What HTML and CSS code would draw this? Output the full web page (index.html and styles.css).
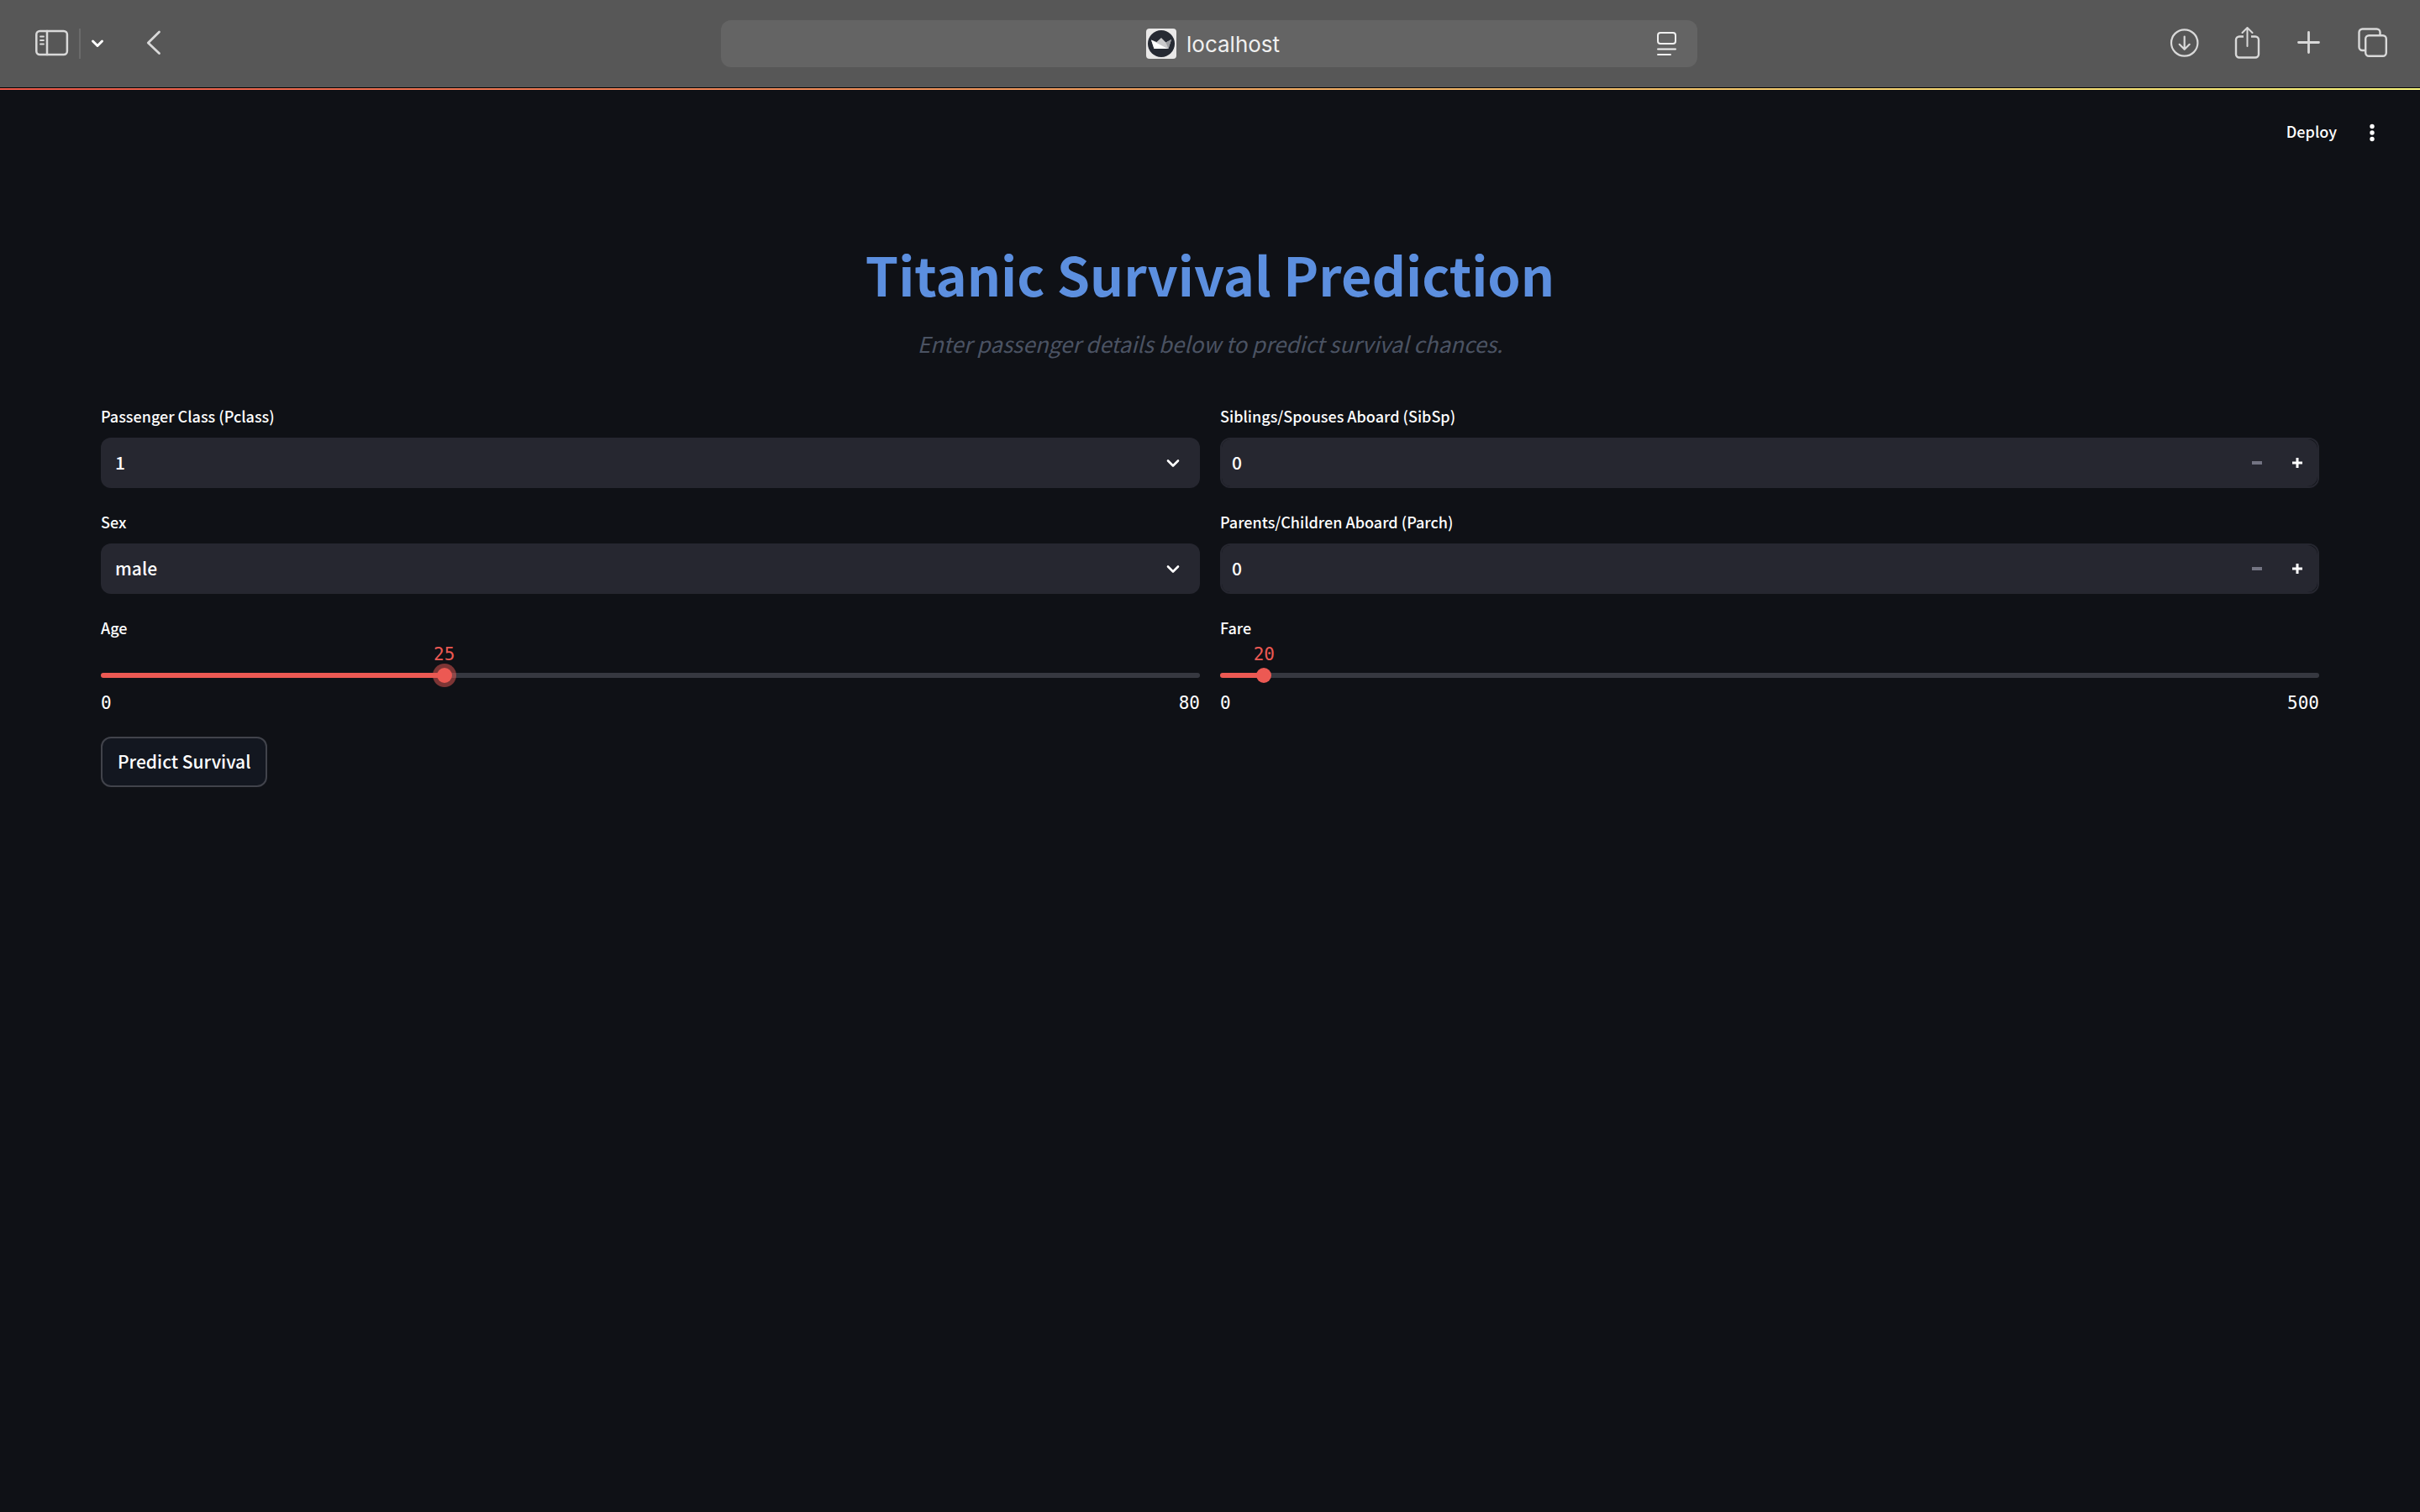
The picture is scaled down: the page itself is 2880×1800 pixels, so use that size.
FILE: index.html
```html
<!DOCTYPE html>
<html lang="en">
<head>
<meta charset="utf-8">
<meta name="viewport" content="width=device-width, initial-scale=1">
<title>Titanic Survival Prediction</title>
<link rel="stylesheet" href="styles.css">
</head>
<body>
<header class="browser">
  <div class="browser-left">
    <button class="icon-btn" type="button" aria-label="Sidebar">
      <svg width="40" height="40" viewBox="0 0 40 40" fill="none" stroke="currentColor" stroke-width="2.5" stroke-linecap="round"><rect x="1.3" y="5" width="36.6" height="28" rx="4"/><path d="M14 5v28"/><path stroke-width="1.8" d="M6 11.500h4M6 16h4M6 20.500h4"/></svg>
    </button>
    <span class="divider"></span>
    <button class="icon-btn bright" type="button" aria-label="Tab groups">
      <svg width="24" height="40" viewBox="0 0 24 40" fill="none" stroke="currentColor" stroke-width="3" stroke-linecap="round" stroke-linejoin="round"><path d="M6.500 17l5.500 5.500 5.500-5.500"/></svg>
    </button>
    <button class="icon-btn back" type="button" aria-label="Back">
      <svg width="40" height="40" viewBox="0 0 40 40" fill="none" stroke="currentColor" stroke-width="2.800" stroke-linecap="round" stroke-linejoin="round"><path d="M26.500 6L13.300 19 26.500 31.500"/></svg>
    </button>
  </div>
  <div class="address">
    <div class="site">
      <svg width="36" height="36" viewBox="0 0 36 36"><rect width="36" height="36" rx="4" fill="#e9e8e8"/><circle cx="18" cy="18" r="16" fill="#262a33"/><path d="M6 13.500L12.500 16 18 11l5.500 5.500L30 13l-3.500 11h-17z" fill="#c9c9cb"/><path d="M6 13.500l19.500 10.500h-16z" fill="#fff"/><path d="M23.500 16.500L30 13l-3.500 11z" fill="#9c9da1"/></svg>
      <input class="url" type="text" value="localhost" aria-label="Address">
    </div>
    <button class="icon-btn reader" type="button" aria-label="Page menu">
      <svg width="24" height="36" viewBox="0 0 24 36" fill="none" stroke="currentColor" stroke-width="2" stroke-linecap="round"><rect x="1" y="5" width="21" height="13" rx="3"/><path d="M1 24.400h21M1 31h15"/></svg>
    </button>
  </div>
  <div class="browser-right">
    <button class="icon-btn" type="button" aria-label="Downloads">
      <svg width="40" height="40" viewBox="0 0 40 40" fill="none" stroke="currentColor" stroke-width="2.200" stroke-linecap="round" stroke-linejoin="round"><circle cx="20.700" cy="19" r="15.700"/><path d="M20.700 11.500v15M14.700 20.800l6 6 6-6"/></svg>
    </button>
    <button class="icon-btn" type="button" aria-label="Share">
      <svg width="40" height="40" viewBox="0 0 40 40" fill="none" stroke="currentColor" stroke-width="2.400" stroke-linecap="round" stroke-linejoin="round"><path stroke-linecap="butt" d="M16 11.500h-5a4 4 0 0 0-4 4v17a4 4 0 0 0 4 4h19a4 4 0 0 0 4-4v-17a4 4 0 0 0-4-4h-5"/><path stroke-width="2" d="M20.500 23V1.500M14.500 7l6-6 6 6"/></svg>
    </button>
    <button class="icon-btn" type="button" aria-label="New tab">
      <svg width="40" height="40" viewBox="0 0 40 40" fill="none" stroke="currentColor" stroke-width="2.800" stroke-linecap="round"><path d="M6.500 18.500h24M18.500 6.500v24"/></svg>
    </button>
    <button class="icon-btn" type="button" aria-label="Tab overview">
      <svg width="40" height="40" viewBox="0 0 40 40" fill="none" stroke="currentColor" stroke-width="2.400"><rect x="11.200" y="10.200" width="24.600" height="24.600" rx="4"/><path d="M10.500 28H7.500a4 4 0 0 1-4-4V6.500a4 4 0 0 1 4-4h17a4 4 0 0 1 4 4v3"/></svg>
    </button>
  </div>
</header>

<div class="decoration"></div>

<div class="toolbar">
  <button class="deploy" type="button">Deploy</button>
  <button class="icon-btn menu" type="button" aria-label="Main menu">
    <svg width="24" height="30" viewBox="0 0 24 30" fill="currentColor"><circle cx="12" cy="7.500" r="2.700"/><circle cx="12" cy="15" r="2.700"/><circle cx="12" cy="22.500" r="2.700"/></svg>
  </button>
</div>

<main class="app">
  <h1 class="title">Titanic Survival Prediction</h1>
  <p class="subtitle">Enter passenger details below to predict survival chances.</p>

  <form class="form">
    <div class="columns">
      <div class="column">
        <div class="field">
          <label class="label" for="pclass">Passenger Class (Pclass)</label>
          <div class="select">
            <select id="pclass"><option selected>1</option><option>2</option><option>3</option></select>
            <svg class="caret" width="24" height="24" viewBox="0 0 24 24" fill="none" stroke="currentColor" stroke-width="2.600" stroke-linecap="round" stroke-linejoin="round"><path d="M6 9.500l6 6 6-6"/></svg>
          </div>
        </div>
        <div class="field">
          <label class="label" for="sex">Sex</label>
          <div class="select">
            <select id="sex"><option selected>male</option><option>female</option></select>
            <svg class="caret" width="24" height="24" viewBox="0 0 24 24" fill="none" stroke="currentColor" stroke-width="2.600" stroke-linecap="round" stroke-linejoin="round"><path d="M6 9.500l6 6 6-6"/></svg>
          </div>
        </div>
        <div class="slider active" style="--pos: 31.25%">
          <label class="label" for="age">Age</label>
          <div class="value-row"><output class="value" for="age">25</output></div>
          <div class="track"><input id="age" type="range" min="0" max="80" value="25"></div>
          <div class="limits"><span>0</span><span>80</span></div>
        </div>
      </div>
      <div class="column">
        <div class="field">
          <label class="label" for="sibsp">Siblings/Spouses Aboard (SibSp)</label>
          <div class="number">
            <input id="sibsp" type="number" min="0" value="0">
            <button class="step" type="button" aria-label="Decrease siblings" disabled><svg width="12" height="12" viewBox="0 0 12 12" fill="currentColor"><path d="M0 4h12v4H0z"/></svg></button>
            <button class="step" type="button" aria-label="Increase siblings"><svg width="12" height="12" viewBox="0 0 12 12" fill="currentColor"><path d="M0 4.500h4.500V0h3v4.500H12v3H7.500V12h-3V7.500H0z"/></svg></button>
          </div>
        </div>
        <div class="field">
          <label class="label" for="parch">Parents/Children Aboard (Parch)</label>
          <div class="number">
            <input id="parch" type="number" min="0" value="0">
            <button class="step" type="button" aria-label="Decrease parents" disabled><svg width="12" height="12" viewBox="0 0 12 12" fill="currentColor"><path d="M0 4h12v4H0z"/></svg></button>
            <button class="step" type="button" aria-label="Increase parents"><svg width="12" height="12" viewBox="0 0 12 12" fill="currentColor"><path d="M0 4.500h4.500V0h3v4.500H12v3H7.500V12h-3V7.500H0z"/></svg></button>
          </div>
        </div>
        <div class="slider" style="--pos: 4%">
          <label class="label" for="fare">Fare</label>
          <div class="value-row"><output class="value" for="fare">20</output></div>
          <div class="track"><input id="fare" type="range" min="0" max="500" value="20"></div>
          <div class="limits"><span>0</span><span>500</span></div>
        </div>
      </div>
    </div>
    <button class="submit" type="button">Predict Survival</button>
  </form>
</main>
</body>
</html>
```
FILE: styles.css
```css
* {
  box-sizing: border-box;
}

body {
  margin: 0;
  min-height: 100vh;
  background: #0f1116;
  color: #fff;
  font-family: "Noto Sans CJK JP", "Noto Sans", sans-serif;
  font-size: 21px;
  font-weight: 500;
}

button,
input,
select {
  margin: 0;
  padding: 0;
  border: 0;
  outline: 0;
  background: none;
  color: inherit;
  font: inherit;
}

svg {
  display: block;
}

/* Browser bar */

.browser {
  display: grid;
  grid-template-columns: 1fr minmax(0, 1162px) 1fr;
  align-items: center;
  height: 104px;
  padding: 0 36px 0 34px;
  background: #575757;
  color: #d9d9d9;
}

.browser-left,
.browser-right {
  display: flex;
  align-items: center;
}

.browser-left {
  padding-left: 8px;
}

.browser-right {
  justify-content: flex-end;
  gap: 35px;
}

.icon-btn {
  flex: none;
}

.bright {
  color: #fff;
}

.divider {
  width: 2px;
  height: 36px;
  margin: 0 8px 0 12px;
  background: #6b6b6b;
}

.back {
  margin-left: 35px;
}

.address {
  display: grid;
  grid-template-columns: 1fr auto 1fr;
  align-items: center;
  height: 56px;
  padding: 0 24px 0 34px;
  border-radius: 12px;
  background: #646464;
  color: #f0f0f0;
}

.site {
  grid-column: 2;
  display: flex;
  align-items: center;
  gap: 12px;
}

.url {
  width: 112px;
  padding-top: 2px;
  font-family: Inter, sans-serif;
  font-size: 26px;
  font-weight: 400;
  line-height: 36px;
}

.reader {
  justify-self: end;
}

/* App header */

.decoration {
  height: 3px;
  border-top: 1px solid #000;
  background: linear-gradient(90deg, #f05a4b, #fffb80);
}

.toolbar {
  display: flex;
  justify-content: flex-end;
  align-items: center;
  gap: 30px;
  padding: 36px 45px 0 0;
}

.deploy {
  padding-bottom: 3px;
  font-size: 18px;
  line-height: 27px;
}

/* Content */

.app {
  padding: 110px 120px 0;
}

.title {
  margin: 0 0 18px;
  color: #5c8fdf;
  font-size: 63px;
  font-weight: 700;
  line-height: 86px;
  text-align: center;
}

.subtitle {
  margin: 0 0 49px;
  color: #4b5363;
  font-size: 26px;
  font-style: italic;
  font-weight: 400;
  line-height: 44px;
  text-align: center;
}

.form {
  display: flex;
  flex-direction: column;
  align-items: flex-start;
  gap: 22px;
}

.columns {
  display: grid;
  grid-template-columns: 1fr 1fr;
  gap: 24px;
  width: 100%;
}

.column {
  display: flex;
  flex-direction: column;
  gap: 25px;
}

.label {
  display: block;
  font-size: 18px;
  line-height: 30px;
}

.field .label {
  margin-bottom: 11px;
}

.select {
  display: grid;
  align-items: center;
}

.select select {
  grid-area: 1 / 1;
  width: 100%;
  height: 60px;
  padding: 0 17px 2px;
  border-radius: 12px;
  background: #262730;
  appearance: none;
}

.caret {
  grid-area: 1 / 1;
  justify-self: end;
  margin-right: 20px;
  pointer-events: none;
}

.number {
  display: flex;
  height: 60px;
  border: 2px solid #262730;
  border-radius: 12px;
}

.number input {
  flex: 1;
  min-width: 0;
  padding: 0 12px 2px;
  border-radius: 10px 0 0 10px;
  background: #262730;
  appearance: textfield;
}

.number input::-webkit-inner-spin-button {
  appearance: none;
}

.step {
  display: flex;
  align-items: center;
  justify-content: center;
  width: 48px;
  background: #262730;
}

.step:last-child {
  border-radius: 0 12px 12px 0;
}

.step:disabled {
  color: #737482;
}

/* Sliders */

.value-row {
  height: 33px;
}

.value {
  display: block;
  width: 60px;
  margin-left: calc(var(--pos) - 30px);
  color: #ec5953;
  font-family: "DejaVu Sans Mono", monospace;
  font-size: 21px;
  font-weight: 400;
  line-height: 34px;
  text-align: center;
}

.track {
  display: flex;
  align-items: center;
  height: 6px;
  margin-top: 6px;
  border-radius: 3px;
  background: linear-gradient(90deg, #ec5953 var(--pos), #363840 var(--pos));
}

/* The input overhangs by half a thumb so that the thumb centre follows the track */
.track input {
  flex: none;
  width: calc(100% + 18px);
  height: 18px;
  margin: 0 -9px;
  appearance: none;
}

.track input::-webkit-slider-thumb {
  width: 18px;
  height: 18px;
  border-radius: 50%;
  background: #ec5953;
  appearance: none;
}

.active .track input::-webkit-slider-thumb {
  box-shadow: 0 0 0 5px rgba(236, 89, 83, 0.5);
}

.limits {
  display: flex;
  justify-content: space-between;
  margin-top: 12px;
  font-family: "DejaVu Sans Mono", monospace;
  font-size: 21px;
  font-weight: 400;
  line-height: 36px;
}

.submit {
  height: 60px;
  padding: 0 18px 2px;
  border: 2px solid #41434b;
  border-radius: 12px;
  background: #131720;
}
```
